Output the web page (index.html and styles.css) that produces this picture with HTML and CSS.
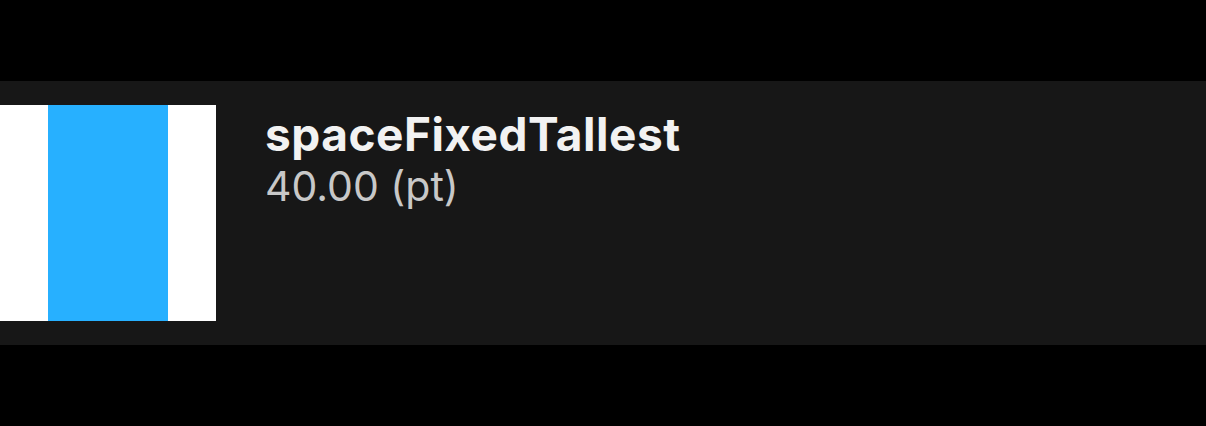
FILE: index.html
```html
<!DOCTYPE html>
<html>
<head>
<meta charset="utf-8">
<link rel="stylesheet" href="styles.css">
</head>
<body>
<div class="page">
  <div class="row">
    <div class="swatch"><div class="bar"></div></div>
    <div class="info">
      <div class="title">spaceFixedTallest</div>
      <div class="value">40.00 (pt)</div>
    </div>
  </div>
</div>
</body>
</html>
```
FILE: styles.css
```css
html, body {
  margin: 0;
  padding: 0;
  background: #000;
  width: 1206px;
  height: 426px;
  overflow: hidden;
}
.page {
  padding-top: 81px;
}
.row {
  background: #171717;
  height: 264px;
  box-sizing: border-box;
  padding: 24px 0;
  display: flex;
  align-items: flex-start;
  gap: 49px;
}
.swatch {
  width: 216px;
  height: 216px;
  background: #fff;
  display: flex;
  justify-content: center;
}
.bar {
  width: 120px;
  height: 100%;
  background: #27b0ff;
}
.info {
  display: flex;
  flex-direction: column;
  font-family: Inter, "Noto Sans", sans-serif;
  padding-top: 4px;
}
.title {
  font-size: 46px;
  font-weight: 700;
  letter-spacing: 0.5px;
  color: #f2f2f2;
  line-height: 50px;
}
.value {
  font-size: 41px;
  font-weight: 400;
  color: #c8c8c8;
  line-height: 54px;
}
```
